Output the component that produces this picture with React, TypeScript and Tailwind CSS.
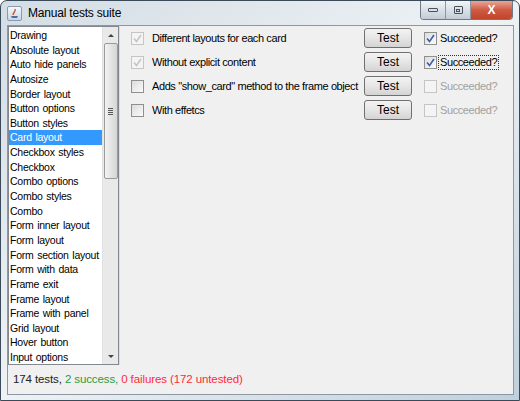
import React from 'react';

const items = [
  'Drawing',
  'Absolute layout',
  'Auto hide panels',
  'Autosize',
  'Border layout',
  'Button options',
  'Button styles',
  'Card layout',
  'Checkbox styles',
  'Checkbox',
  'Combo options',
  'Combo styles',
  'Combo',
  'Form inner layout',
  'Form layout',
  'Form section layout',
  'Form with data',
  'Frame exit',
  'Frame layout',
  'Frame with panel',
  'Grid layout',
  'Hover button',
  'Input options',
];

const tests = [
  { label: 'Different layouts for each card', done: true, ok: true, focus: false },
  { label: 'Without explicit content', done: true, ok: true, focus: true },
  { label: 'Adds "show_card" method to the frame object', done: false, ok: false, focus: false },
  { label: 'With effetcs', done: false, ok: false, focus: false },
];

function Check({ checked, disabled }: { checked: boolean; disabled: boolean }) {
  return (
    <div
      className={`w-[13px] h-[13px] border flex items-center justify-center ${
        disabled ? 'border-[#c5c5c5] bg-[#f4f4f4]' : 'border-[#8e8f8f] bg-gradient-to-br from-[#dcdcdc] to-[#fbfbfb]'
      }`}
    >
      {checked && (
        <svg width="9" height="9" viewBox="0 0 9 9">
          <path
            d="M1 4.5 L3.5 7.5 L8 1"
            fill="none"
            stroke={disabled ? '#c4c4c4' : '#3b5ea8'}
            strokeWidth="1.6"
          />
        </svg>
      )}
    </div>
  );
}

export default function App() {
  return (
    <div
      className="w-[520px] h-[401px] relative overflow-hidden bg-gradient-to-br from-[#d3dde5] via-[#eef2f5] to-[#bfd0dc] border border-[#3a4a58] rounded-t-[7px]"
      style={{ fontFamily: '"Liberation Sans", Arial, sans-serif' }}
    >
      {/* Title bar */}
      <div className="h-[24px] flex items-center pl-[6px]">
        <div className="w-[15px] h-[15px] rounded-[2px] border border-[#8a9bb0] bg-gradient-to-b from-[#f4f8fb] to-[#c8d6e4] flex items-center justify-center">
          <svg width="11" height="11" viewBox="0 0 11 11">
            <path d="M2 8 L9 8 L8 10 L3 10 Z" fill="#4a6fa0" />
            <path d="M4 7 C4 4 7 4 6 1" stroke="#d0502a" strokeWidth="1.4" fill="none" />
          </svg>
        </div>
        <span className="ml-[6px] text-[12px] tracking-[-0.2px] text-black">
          Manual tests suite
        </span>
        <div className="ml-auto self-start flex h-[19px] mr-[6px] rounded-b-[4px] border border-t-0 border-[#6f7a86] overflow-hidden">
          <div className="w-[25px] bg-gradient-to-b from-[#f2f5f8] to-[#c3ccd6] border-r border-[#8d97a2] flex items-center justify-center">
            <div className="w-[10px] h-[4px] border border-[#47505a] rounded-[1px]" />
          </div>
          <div className="w-[25px] bg-gradient-to-b from-[#f2f5f8] to-[#c3ccd6] border-r border-[#8d97a2] flex items-center justify-center">
            <div className="w-[9px] h-[8px] border border-[#47505a] rounded-[1px] flex items-center justify-center">
              <div className="w-[4px] h-[3px] border border-[#47505a]" />
            </div>
          </div>
          <div className="w-[41px] bg-gradient-to-b from-[#e8a597] via-[#cf5a42] to-[#c0442c] flex items-center justify-center text-white text-[12px] font-bold">
            X
          </div>
        </div>
      </div>

      {/* Client area */}
      <div className="absolute left-[6px] top-[24px] w-[507px] h-[370px] border border-[#8c98a4] bg-[#f0f0f0] flex flex-col text-[11px]">
        <div className="flex h-[339px]">
          {/* List */}
          <div className="w-[111px] border border-[#828790] bg-white flex">
            <div className="flex-1 pt-[1px] overflow-hidden">
              {items.map((it) => (
                <div
                  key={it}
                  className={`h-[14.65px] leading-[14.65px] pl-[1px] whitespace-nowrap text-[10.5px] tracking-[-0.25px] ${
                    it === 'Card layout' ? 'bg-[#3399ff] text-white' : 'text-black'
                  }`}
                  style={{ wordSpacing: '1px' }}
                >
                  {it}
                </div>
              ))}
            </div>
            <div className="w-[16px] bg-[#e9e9e9] border-l border-[#e1e1e1] flex flex-col items-center">
              <div className="h-[16px] flex items-center justify-center">
                <div className="w-0 h-0 border-l-[3px] border-r-[3px] border-b-[3px] border-l-transparent border-r-transparent border-b-[#444]" />
              </div>
              <div className="w-[14px] h-[136px] rounded-[2px] border border-[#9a9a9a] bg-gradient-to-r from-[#f2f2f2] to-[#d6d6d6] flex items-center justify-center">
                <div className="flex flex-col gap-[1px]">
                  <div className="w-[5px] h-[1px] bg-[#555]" />
                  <div className="w-[5px] h-[1px] bg-[#555]" />
                  <div className="w-[5px] h-[1px] bg-[#555]" />
                  <div className="w-[5px] h-[1px] bg-[#555]" />
                </div>
              </div>
              <div className="mt-auto h-[16px] flex items-center justify-center">
                <div className="w-0 h-0 border-l-[3px] border-r-[3px] border-t-[3px] border-l-transparent border-r-transparent border-t-[#444]" />
              </div>
            </div>
          </div>

          {/* Tests panel */}
          <div className="flex-1 border-l border-[#d9dee3]">
            {tests.map((t) => (
              <div key={t.label} className="h-[24px] flex items-center text-[11px] tracking-[-0.4px]">
                <div className="ml-[11px]">
                  <Check checked={t.done} disabled={t.done} />
                </div>
                <span className="ml-[8px] w-[212px] whitespace-nowrap text-black">
                  {t.label}
                </span>
                <button className="w-[48px] h-[20px] rounded-[3px] border border-[#707070] bg-gradient-to-b from-[#f3f3f3] via-[#e6e6e6] to-[#d4d4d4] text-[12px] tracking-normal text-black">
                  Test
                </button>
                <div className="ml-[12px]">
                  <Check checked={t.ok} disabled={!t.done} />
                </div>
                <span
                  className={`ml-[2px] px-[1px] leading-[13px] ${
                    t.done ? 'text-black' : 'text-[#a0a0a0]'
                  } ${t.focus ? 'outline outline-1 outline-dotted outline-[#333]' : ''}`}
                >
                  Succeeded?
                </span>
              </div>
            ))}
          </div>
        </div>

        {/* Status */}
        <div className="flex-1 flex items-center pl-[5px] text-[11.5px] tracking-[-0.1px]">
          <span className="text-[#222]">174 tests,</span>
          <span className="ml-[3px] text-[#2e9a3a]">2 success,</span>
          <span className="ml-[3px] text-[#ff2a40]">0 failures (172 untested)</span>
        </div>
      </div>
    </div>
  );
}
